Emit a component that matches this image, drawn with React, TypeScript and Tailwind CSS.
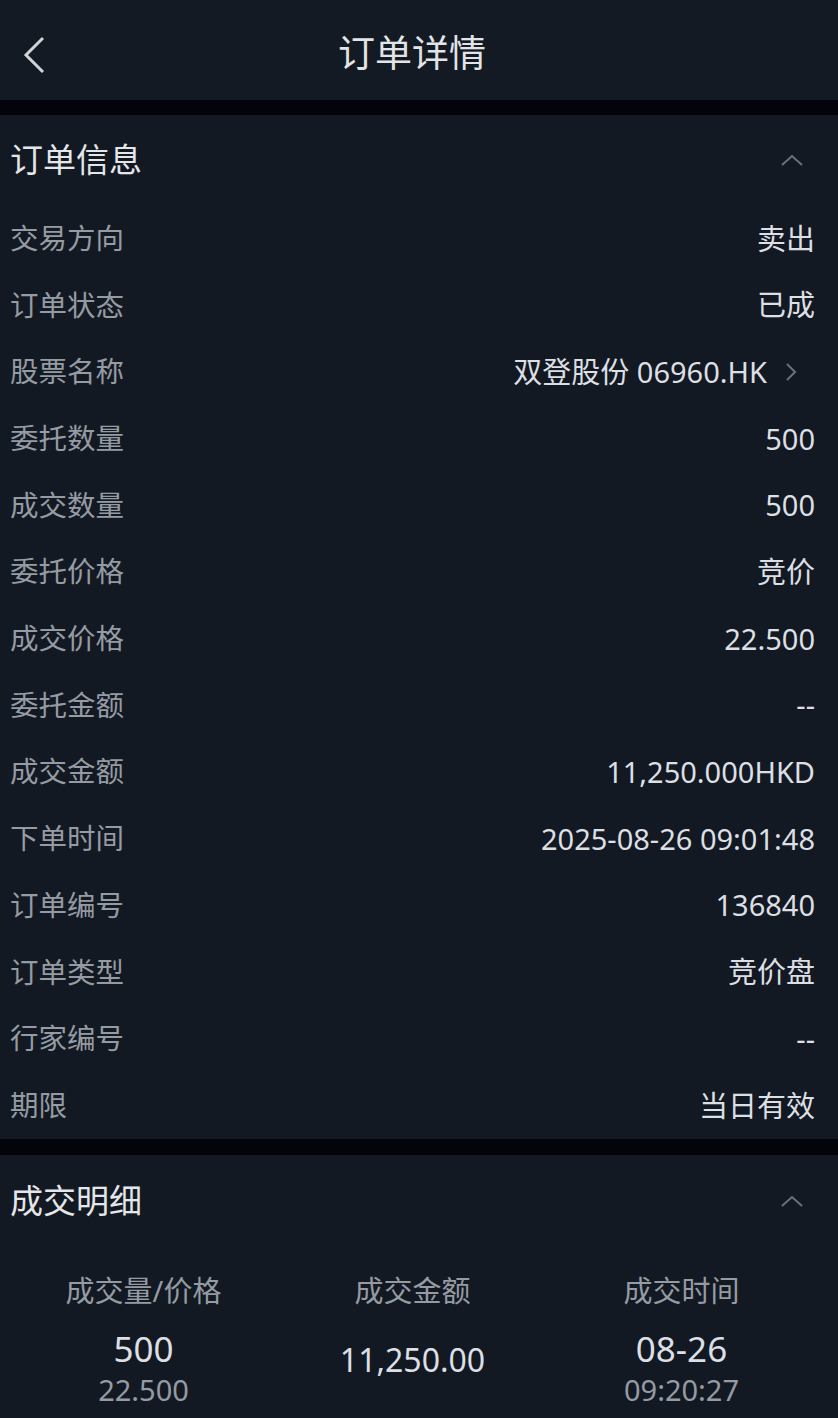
import React from "react";

const rows: { label: string; value: string; link?: boolean }[] = [
  { label: "交易方向", value: "卖出" },
  { label: "订单状态", value: "已成" },
  { label: "股票名称", value: "双登股份 06960.HK", link: true },
  { label: "委托数量", value: "500" },
  { label: "成交数量", value: "500" },
  { label: "委托价格", value: "竞价" },
  { label: "成交价格", value: "22.500" },
  { label: "委托金额", value: "--" },
  { label: "成交金额", value: "11,250.000HKD" },
  { label: "下单时间", value: "2025-08-26 09:01:48" },
  { label: "订单编号", value: "136840" },
  { label: "订单类型", value: "竞价盘" },
  { label: "行家编号", value: "--" },
  { label: "期限", value: "当日有效" },
];

function ChevronUp() {
  return (
    <svg width="24" height="14" viewBox="0 0 24 14" fill="none">
      <path d="M2 12 L12 3 L22 12" stroke="#6b7079" strokeWidth="2" />
    </svg>
  );
}

export default function App() {
  return (
    <div
      className="min-h-[1418px] bg-[#131922] text-[#dcdfe3]"
      style={{ fontFamily: '"Noto Sans", "Noto Sans CJK SC", sans-serif' }}
    >
      <header className="relative flex h-[100px] items-center justify-center bg-[#141a23] pr-[14px] pt-[6px]">
        <svg className="absolute left-[20px] top-[35px]" width="28" height="40" viewBox="0 0 28 40" fill="none">
          <path d="M23 3 L6 20 L23 37" stroke="#d0d3d7" strokeWidth="3" strokeLinejoin="miter" />
        </svg>
        <h1 className="text-[37px] font-normal text-[#e2e4e7]">订单详情</h1>
      </header>
      <div className="h-[15px] bg-[#03040b]" />

      <section>
        <div className="flex h-[90px] items-center justify-between pl-[10px] pr-[34px]">
          <h2 className="text-[33px] font-normal text-[#e4e6e9]">订单信息</h2>
          <ChevronUp />
        </div>
        <div>
          {rows.map((r) => (
            <div key={r.label} className="flex h-[66.7px] items-center justify-between pl-[10px] pr-[23px]">
              <span className="text-[28.5px] text-[#959ba3]">{r.label}</span>
              <span className="flex items-center text-[29px]">
                <span>{r.value}</span>
                {r.link && (
                  <svg className="ml-[18px] mr-[18px]" width="12" height="20" viewBox="0 0 12 20" fill="none">
                    <path d="M2 2 L10 10 L2 18" stroke="#6b7079" strokeWidth="2" />
                  </svg>
                )}
              </span>
            </div>
          ))}
        </div>
      </section>
      <div className="h-[16px] bg-[#03040b]" />

      <section>
        <div className="flex h-[92px] items-center justify-between pl-[10px] pr-[34px]">
          <h2 className="text-[33px] font-normal text-[#e4e6e9]">成交明细</h2>
          <ChevronUp />
        </div>
        <div className="grid grid-cols-3 pl-[9px] pr-[22px] pt-[24px] text-center">
          <div className="text-[29px] leading-[40px] text-[#959ba3]">成交量/价格</div>
          <div className="text-[29px] leading-[40px] text-[#959ba3]">成交金额</div>
          <div className="text-[29px] leading-[40px] text-[#959ba3]">成交时间</div>
          <div className="mt-[16px] flex flex-col items-center">
            <span className="text-[35px] leading-[44px]">500</span>
            <span className="text-[29px] leading-[38px] text-[#959ba3]">22.500</span>
          </div>
          <div className="mt-[16px] flex items-center justify-center pb-[16px]">
            <span className="text-[32px]">11,250.00</span>
          </div>
          <div className="mt-[16px] flex flex-col items-center">
            <span className="text-[35px] leading-[44px]">08-26</span>
            <span className="text-[29px] leading-[38px] text-[#959ba3]">09:20:27</span>
          </div>
        </div>
      </section>
    </div>
  );
}
